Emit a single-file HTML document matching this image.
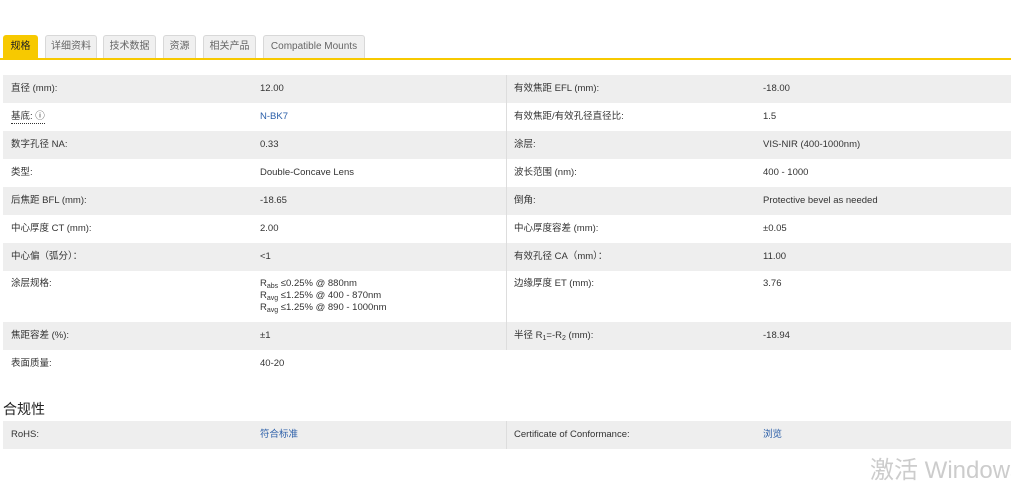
<!DOCTYPE html>
<html><head><meta charset="utf-8"><style>
*{margin:0;padding:0;box-sizing:border-box}
body{width:1011px;height:469px;overflow:hidden;background:#fff;font-family:"Liberation Sans","Noto Sans CJK SC",sans-serif;font-size:9.5px;color:#333;position:relative}
.tab{position:absolute;top:35px;height:23px;background:#f0f0f0;border:1px solid #d8d8d8;border-bottom:none;border-radius:3px 3px 0 0;color:#666;font-size:10px;line-height:22px;text-align:center}
.tab.a{background:#f7c900;border-color:#f7c900;color:#222}
.line{position:absolute;top:58px;left:0;width:1011px;height:2px;background:#f7c900}
.r{position:absolute;height:28px}
.g{background:#eeeeee}
.c{position:absolute;white-space:nowrap;line-height:12px}
a{color:#2a5ea8;text-decoration:none}
sub{font-size:7px;vertical-align:-2px;line-height:0}
.div{position:absolute;left:506px;top:75px;width:1px;height:275px;background:#ddd}
</style></head><body>
<div class="tab a" style="left:3px;width:35px">规格</div>
<div class="tab" style="left:45px;width:52px">详细资料</div>
<div class="tab" style="left:103px;width:53px">技术数据</div>
<div class="tab" style="left:163px;width:33px">资源</div>
<div class="tab" style="left:203px;width:53px">相关产品</div>
<div class="tab" style="left:263px;width:102px">Compatible Mounts</div>
<div class="line"></div>

<div class="r g" style="top:75px;left:3px;width:1008px"></div>
<div class="r g" style="top:131px;left:3px;width:1008px"></div>
<div class="r g" style="top:187px;left:3px;width:1008px"></div>
<div class="r g" style="top:243px;left:3px;width:1008px"></div>
<div class="r g" style="top:322px;left:3px;width:1008px"></div>
<div class="div"></div>

<div class="c" style="left:11px;top:83px">直径 (mm):</div><div class="c" style="left:260px;top:83px">12.00</div>
<div class="c" style="left:514px;top:83px">有效焦距 EFL (mm):</div><div class="c" style="left:763px;top:83px">-18.00</div>
<div class="c" style="left:11px;top:111px;border-bottom:1px dotted #333">基底: ⓘ</div><div class="c" style="left:260px;top:111px"><a>N-BK7</a></div>
<div class="c" style="left:514px;top:111px">有效焦距/有效孔径直径比:</div><div class="c" style="left:763px;top:111px">1.5</div>
<div class="c" style="left:11px;top:139px">数字孔径 NA:</div><div class="c" style="left:260px;top:139px">0.33</div>
<div class="c" style="left:514px;top:139px">涂层:</div><div class="c" style="left:763px;top:139px">VIS-NIR (400-1000nm)</div>
<div class="c" style="left:11px;top:167px">类型:</div><div class="c" style="left:260px;top:167px">Double-Concave Lens</div>
<div class="c" style="left:514px;top:167px">波长范围 (nm):</div><div class="c" style="left:763px;top:167px">400 - 1000</div>
<div class="c" style="left:11px;top:195px">后焦距 BFL (mm):</div><div class="c" style="left:260px;top:195px">-18.65</div>
<div class="c" style="left:514px;top:195px">倒角:</div><div class="c" style="left:763px;top:195px">Protective bevel as needed</div>
<div class="c" style="left:11px;top:223px">中心厚度 CT (mm):</div><div class="c" style="left:260px;top:223px">2.00</div>
<div class="c" style="left:514px;top:223px">中心厚度容差 (mm):</div><div class="c" style="left:763px;top:223px">±0.05</div>
<div class="c" style="left:11px;top:251px">中心偏（弧分）：</div><div class="c" style="left:260px;top:251px">&lt;1</div>
<div class="c" style="left:514px;top:251px">有效孔径 CA（mm）：</div><div class="c" style="left:763px;top:251px">11.00</div>
<div class="c" style="left:11px;top:278px">涂层规格:</div>
<div class="c" style="left:260px;top:278px">R<sub>abs</sub> ≤0.25% @ 880nm<br>R<sub>avg</sub> ≤1.25% @ 400 - 870nm<br>R<sub>avg</sub> ≤1.25% @ 890 - 1000nm</div>
<div class="c" style="left:514px;top:278px">边缘厚度 ET (mm):</div><div class="c" style="left:763px;top:278px">3.76</div>
<div class="c" style="left:11px;top:330px">焦距容差 (%):</div><div class="c" style="left:260px;top:330px">±1</div>
<div class="c" style="left:514px;top:330px">半径 R<sub>1</sub>=-R<sub>2</sub> (mm):</div><div class="c" style="left:763px;top:330px">-18.94</div>
<div class="c" style="left:11px;top:358px">表面质量:</div><div class="c" style="left:260px;top:358px">40-20</div>

<div class="c" style="left:3px;top:400px;font-size:14px;line-height:18px;color:#222">合规性</div>
<div class="r g" style="top:421px;left:3px;width:1008px"></div>
<div style="position:absolute;left:506px;top:421px;width:1px;height:28px;background:#ddd"></div>
<div class="c" style="left:11px;top:429px">RoHS:</div><div class="c" style="left:260px;top:429px"><a>符合标准</a></div>
<div class="c" style="left:514px;top:429px">Certificate of Conformance:</div><div class="c" style="left:763px;top:429px"><a>浏览</a></div>
<div class="c" style="left:870px;top:457px;font-size:24px;line-height:28px;color:#ccc">激活 Windows</div>
</body></html>
